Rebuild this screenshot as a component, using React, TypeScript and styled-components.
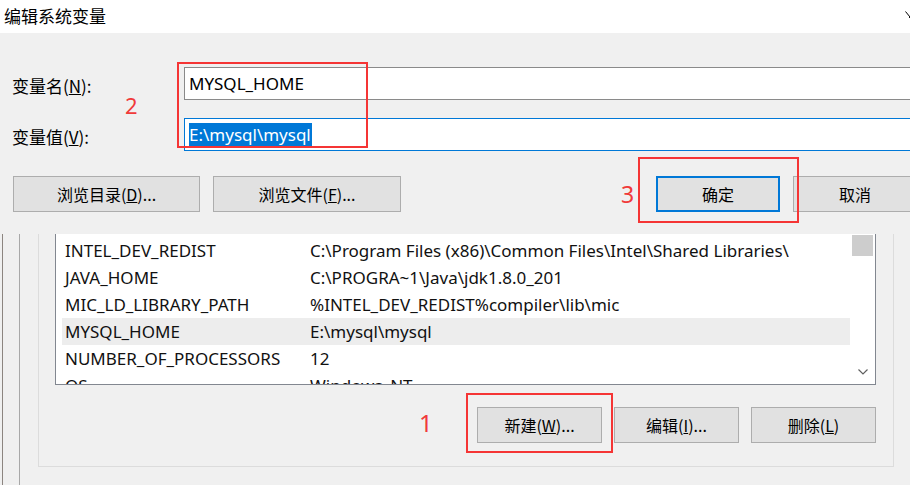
import React from "react";
import styled, { createGlobalStyle } from "styled-components";

// Types
interface EnvVar {
	name: string;
	value: string;
	selected?: boolean;
}

// Data
const envVars: EnvVar[] = [
	{
		name: "INTEL_DEV_REDIST",
		value: "C:\\Program Files (x86)\\Common Files\\Intel\\Shared Libraries\\",
	},
	{ name: "JAVA_HOME", value: "C:\\PROGRA~1\\Java\\jdk1.8.0_201" },
	{ name: "MIC_LD_LIBRARY_PATH", value: "%INTEL_DEV_REDIST%compiler\\lib\\mic" },
	{ name: "MYSQL_HOME", value: "E:\\mysql\\mysql", selected: true },
	{ name: "NUMBER_OF_PROCESSORS", value: "12" },
	{ name: "OS", value: "Windows_NT" },
];

// Styles
const GlobalStyle = createGlobalStyle`
	html, body {
		margin: 0;
		padding: 0;
		background: #fff;
	}
	body {
		font-family: "Noto Sans", "Noto Sans CJK SC", sans-serif;
		color: #000;
	}
	* {
		box-sizing: border-box;
	}
`;

const Screen = styled.div`
	position: relative;
	width: 918px;
	height: 485px;
	overflow: hidden;
	background: #fff;
`;

const Dialog = styled.section`
	width: 910px;
	overflow: hidden;
`;

const TitleBar = styled.header`
	height: 33px;
	background: #fff;
	display: flex;
	align-items: center;
	justify-content: space-between;
	padding-left: 4px;
`;

const Title = styled.h1`
	margin: -3px 0 0;
	font-size: 17px;
	font-weight: 400;
	line-height: 1;
	font-family: "Noto Sans CJK SC", sans-serif;
`;

const CloseClip = styled.span`
	align-self: flex-start;
	margin-top: 6px;
	width: 5px;
	height: 12px;
	overflow: hidden;
	display: block;
`;

const DialogBody = styled.div`
	background: #f0f0f0;
	padding: 34px 0 22px 12px;
	display: flex;
	flex-direction: column;
	overflow: hidden;
`;

const FieldRow = styled.div`
	display: flex;
	align-items: center;

	& + & {
		margin-top: 18px;
	}
`;

const FieldLabel = styled.label`
	width: 172px;
	flex: none;
	padding-top: 3px;
	font-size: 17px;
	font-family: "Noto Sans CJK SC", sans-serif;
`;

const TextInput = styled.div<{ $focused?: boolean }>`
	flex: 1;
	margin-right: -40px;
	height: 33px;
	background: #fff;
	border: 1px solid ${(p) => (p.$focused ? "#0078d7" : "#8a8a8a")};
	display: flex;
	align-items: center;
	padding-left: 4px;
	font-size: 17px;
	white-space: nowrap;
`;

const Selection = styled.span`
	background: #0078d7;
	color: #fff;
	line-height: 24px;
	padding: 0 1px 0 0;
`;

const ButtonRow = styled.div<{ $top: number }>`
	display: flex;
	margin-top: ${(p) => p.$top}px;
`;

const ButtonGroup = styled.div<{ $gap: number; $push?: boolean; $bleed?: number }>`
	display: flex;
	gap: ${(p) => p.$gap}px;
	margin-left: ${(p) => (p.$push ? "auto" : "1px")};
	margin-right: ${(p) => -(p.$bleed || 0)}px;
`;

const Button = styled.button<{ $width: number; $default?: boolean }>`
	width: ${(p) => p.$width}px;
	height: 36px;
	flex: none;
	padding: 0;
	background: #e1e1e1;
	border: ${(p) => (p.$default ? "2px solid #0078d7" : "1px solid #adadad")};
	font-family: "Noto Sans CJK SC", sans-serif;
	font-size: 16px;
	color: #000;
	white-space: nowrap;
`;

const BackWindow = styled.div`
	width: 910px;
	height: 251px;
	background: #f0f0f0;
	padding-left: 2px;
	display: flex;
`;

const WindowEdge = styled.div<{ $color: string; $inset: number }>`
	flex: 1;
	display: flex;
	border-left: 1px solid ${(p) => p.$color};
	padding-left: ${(p) => p.$inset}px;
`;

const GroupBox = styled.div`
	width: 856px;
	height: 233px;
	border: 1px solid #dcdcdc;
	border-top: none;
	padding: 0 17px 23px 16px;
	display: flex;
	flex-direction: column;
`;

const ListBox = styled.div`
	height: 151px;
	background: #fff;
	border: 1px solid #828790;
	border-top: none;
	display: flex;
	overflow: hidden;
`;

const ListRows = styled.div`
	flex: 1;
	padding: 3px 1px 0 6px;
	overflow: hidden;
`;

const ListRow = styled.div<{ $selected?: boolean }>`
	height: 27px;
	display: grid;
	grid-template-columns: 245px 1fr;
	align-items: center;
	padding-left: 3px;
	background: ${(p) => (p.$selected ? "#ededed" : "transparent")};
	font-size: 17px;
	white-space: nowrap;
	color: #111;
`;

const ScrollBar = styled.div`
	width: 24px;
	flex: none;
	display: flex;
	flex-direction: column;
	justify-content: space-between;
	align-items: center;
	padding: 1px 0 9px;
`;

const ScrollThumb = styled.div`
	width: 21px;
	height: 21px;
	margin-left: -1px;
	background: #cdcdcd;
`;

const ListButtons = styled.div`
	display: flex;
	justify-content: flex-end;
	gap: 12px;
	margin-top: 22px;
`;

const Mark = styled.div<{ $x: number; $y: number; $w: number; $h: number }>`
	position: absolute;
	left: ${(p) => p.$x}px;
	top: ${(p) => p.$y}px;
	width: ${(p) => p.$w}px;
	height: ${(p) => p.$h}px;
	border: 2px solid #f53535;
	pointer-events: none;
`;

const MarkNumber = styled.span<{ $x: number; $y: number; $size: number }>`
	position: absolute;
	left: ${(p) => p.$x}px;
	top: ${(p) => p.$y}px;
	font-size: ${(p) => p.$size}px;
	line-height: 1;
	color: #f03a3a;
	font-family: "Noto Sans", sans-serif;
`;

// Component
export default function App(): JSX.Element {
	return (
		<>
			<GlobalStyle />
			<Screen>
				<Dialog>
					<TitleBar>
						<Title>编辑系统变量</Title>
						<CloseClip>
							<svg width="10" height="12" viewBox="0 0 10 12">
								<path
									d="M0.5 0.5 L9.5 11.5 M9.5 0.5 L0.5 11.5"
									stroke="#000"
									strokeWidth="1"
									fill="none"
								/>
							</svg>
						</CloseClip>
					</TitleBar>
					<DialogBody>
						<FieldRow>
							<FieldLabel>
								变量名(<u>N</u>):
							</FieldLabel>
							<TextInput>MYSQL_HOME</TextInput>
						</FieldRow>
						<FieldRow>
							<FieldLabel>
								变量值(<u>V</u>):
							</FieldLabel>
							<TextInput $focused>
								<Selection>E:\mysql\mysql</Selection>
							</TextInput>
						</FieldRow>
						<ButtonRow $top={25}>
							<ButtonGroup $gap={13}>
								<Button $width={187}>
									浏览目录(<u>D</u>)...
								</Button>
								<Button $width={188}>
									浏览文件(<u>F</u>)...
								</Button>
							</ButtonGroup>
							<ButtonGroup $gap={13} $push $bleed={7}>
								<Button $width={124} $default>
									确定
								</Button>
								<Button $width={124}>取消</Button>
							</ButtonGroup>
						</ButtonRow>
					</DialogBody>
				</Dialog>
				<BackWindow>
					<WindowEdge $color="#8c8580" $inset={16}>
						<WindowEdge $color="#a8a8a8" $inset={18}>
							<GroupBox>
								<ListBox>
									<ListRows>
										{envVars.map((v) => (
											<ListRow key={v.name} $selected={v.selected}>
												<span>{v.name}</span>
												<span>{v.value}</span>
											</ListRow>
										))}
									</ListRows>
									<ScrollBar>
										<ScrollThumb />
										<svg width="10" height="6" viewBox="0 0 10 6">
											<path
												d="M0.5 0.5 L5 5 L9.5 0.5"
												stroke="#606060"
												strokeWidth="1.2"
												fill="none"
											/>
										</svg>
									</ScrollBar>
								</ListBox>
								<ListButtons>
									<Button $width={125}>
										新建(<u>W</u>)...
									</Button>
									<Button $width={125}>
										编辑(<u>I</u>)...
									</Button>
									<Button $width={125}>
										删除(<u>L</u>)
									</Button>
								</ListButtons>
							</GroupBox>
						</WindowEdge>
					</WindowEdge>
				</BackWindow>
				<Mark $x={177} $y={62} $w={191} $h={86} />
				<MarkNumber $x={125} $y={94} $size={22}>
					2
				</MarkNumber>
				<Mark $x={638} $y={157} $w={161} $h={66} />
				<MarkNumber $x={621} $y={183} $size={23}>
					3
				</MarkNumber>
				<Mark $x={466} $y={393} $w={147} $h={60} />
				<MarkNumber $x={419} $y={411} $size={24}>
					1
				</MarkNumber>
			</Screen>
		</>
	);
}
